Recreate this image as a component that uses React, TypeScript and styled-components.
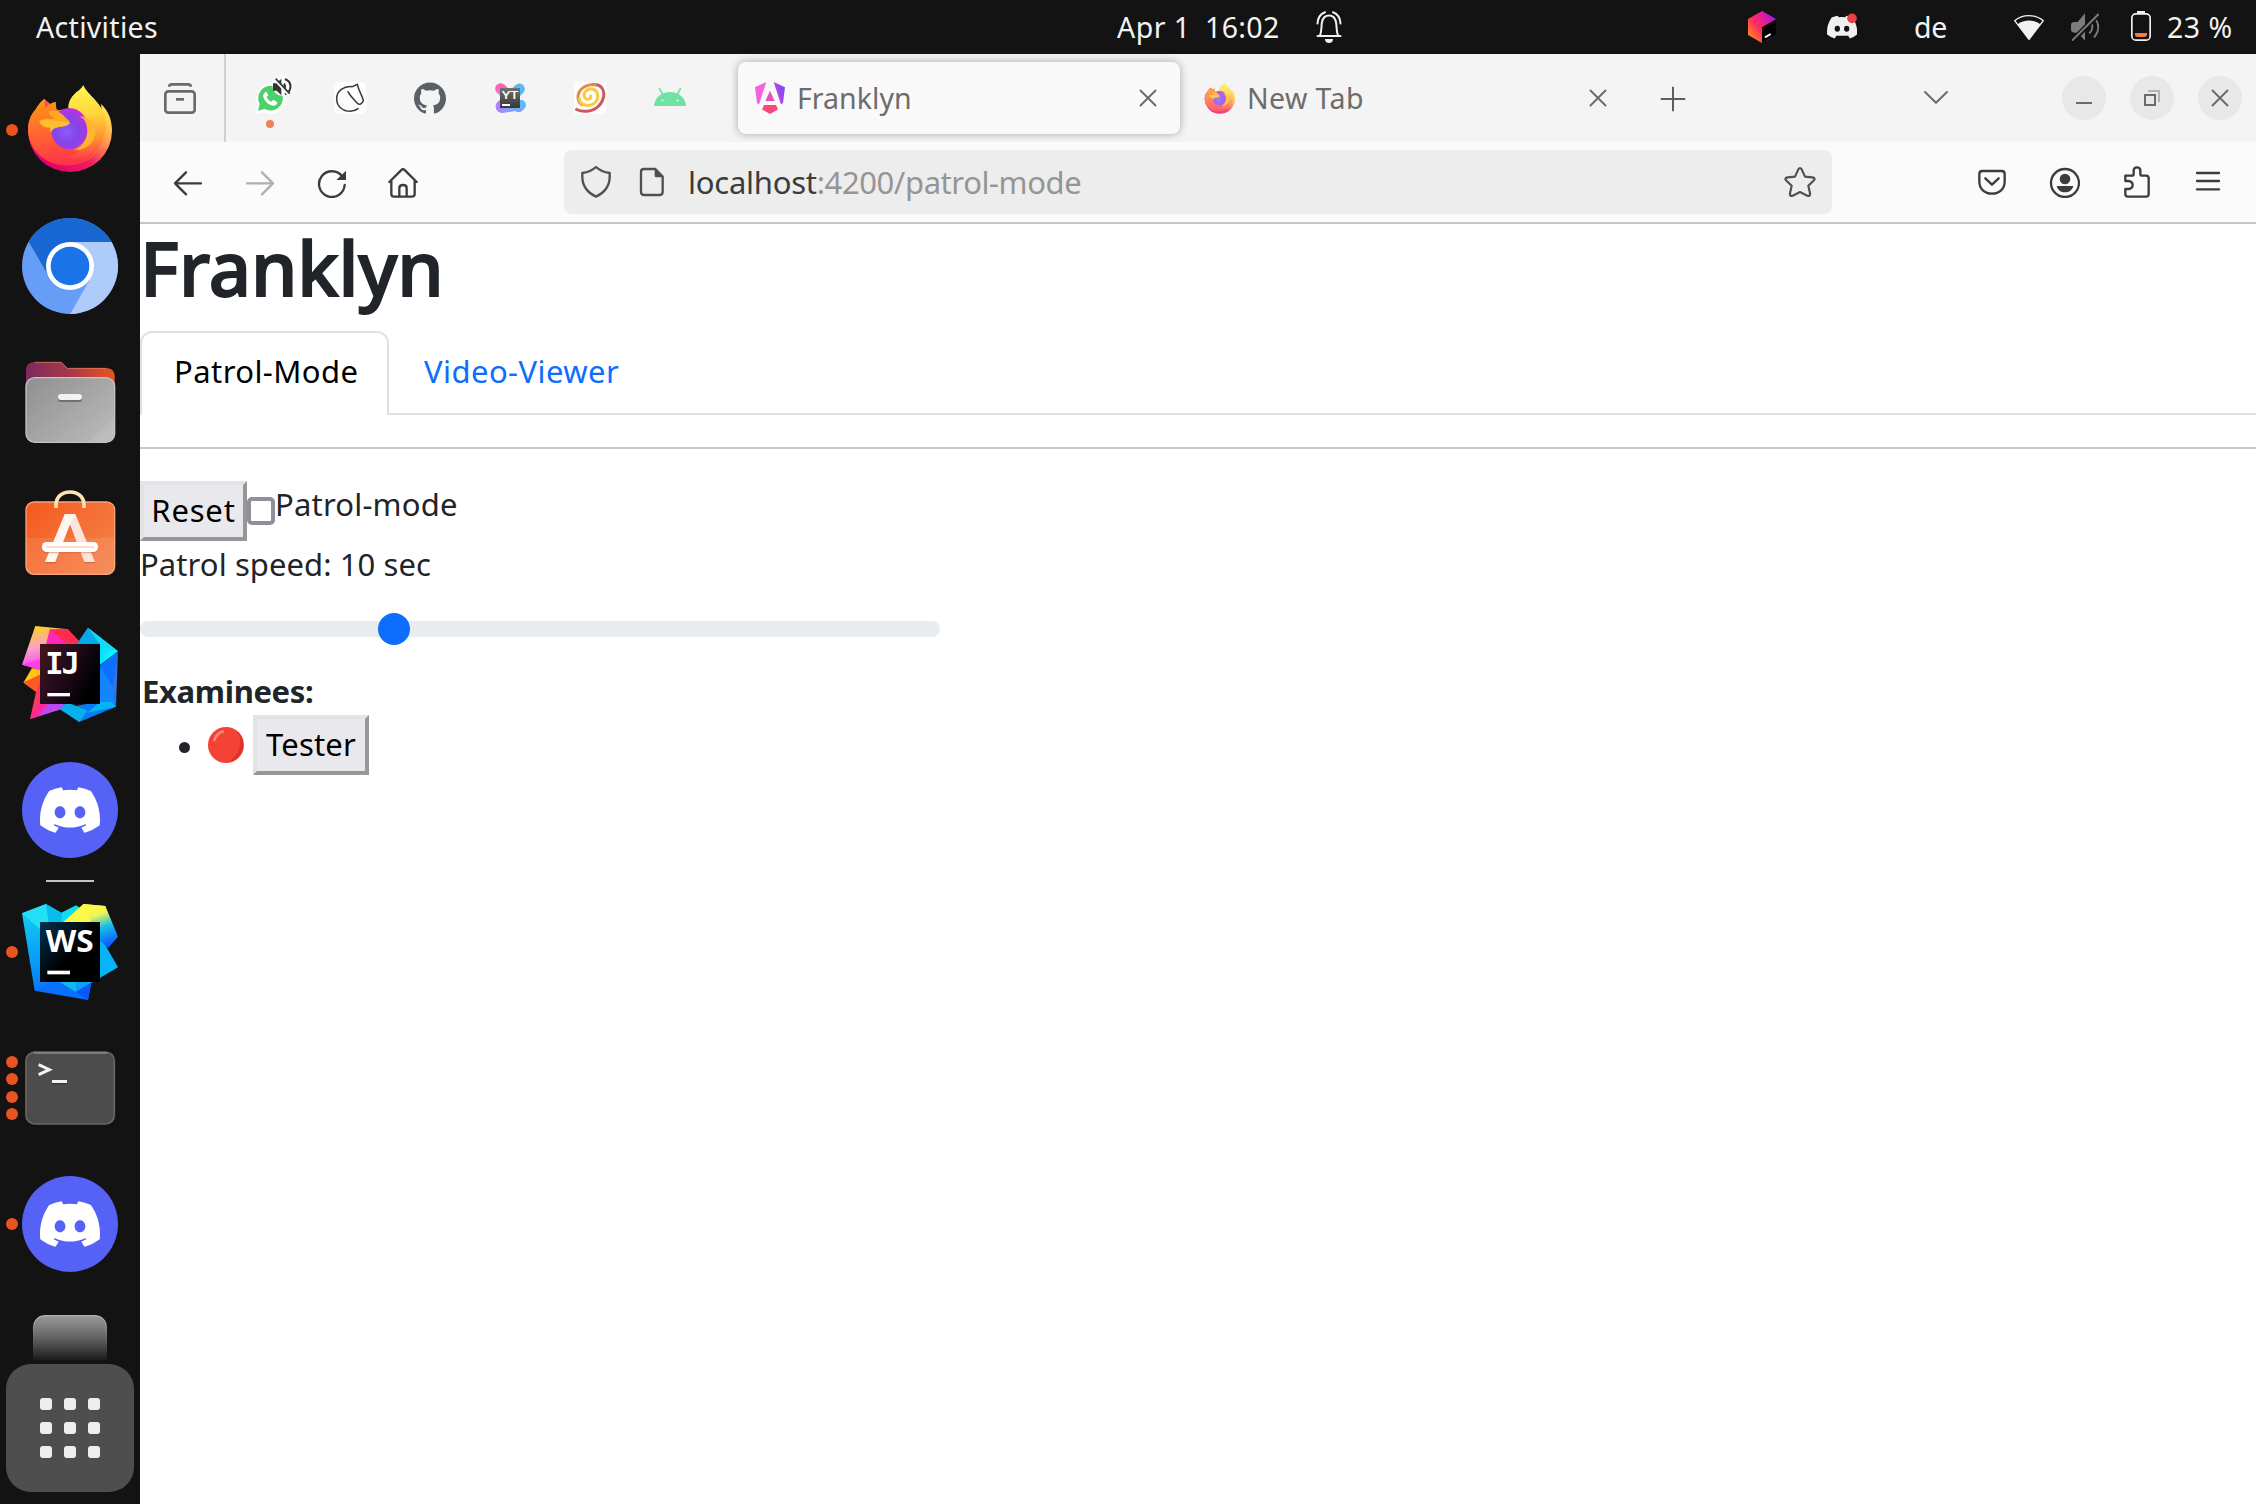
import React from "react";
import styled, { createGlobalStyle } from "styled-components";
import { SiDiscord, SiGithub } from "react-icons/si";

const GlobalStyle = createGlobalStyle`
  * { box-sizing: border-box; }
  body { margin: 0; background: #fff; font-family: "Noto Sans", "Open Sans", sans-serif; }
  svg { display: block; flex: none; }
`;

const Screen = styled.div`
  width: 2256px;
  height: 1504px;
  overflow: hidden;
  display: grid;
  grid-template: 54px 1450px / 140px 2116px;
  background: #fff;
`;

const TopBar = styled.header`
  grid-column: 1 / 3;
  display: flex;
  align-items: center;
  background: #131313;
  color: #f2f2f2;
  font-size: 28.5px;
  line-height: 54px;
  white-space: pre;
`;

const Slot = styled.div<{ $w: number; $ls?: number; $pad?: number }>`
  flex: none;
  display: flex;
  align-items: center;
  width: ${(p) => p.$w}px;
  padding-left: ${(p) => p.$pad || 0}px;
  letter-spacing: ${(p) => p.$ls || 0}px;
`;

const Dock = styled.nav`
  display: flex;
  flex-direction: column;
  background: #131313;
  padding-top: 8px;
`;

const DockItem = styled.div<{ $clip?: boolean }>`
  flex: none;
  height: ${(p) => (p.$clip ? 68 : 136)}px;
  overflow: hidden;
  display: grid;
  grid-template-columns: 22px 96px;
  align-items: ${(p) => (p.$clip ? "start" : "center")};
  padding-top: ${(p) => (p.$clip ? 20 : 0)}px;
`;

const Dots = styled.div`
  display: flex;
  flex-direction: column;
  gap: 5.4px;
  padding-left: 6px;
`;

const Dot = styled.i`
  width: 12px;
  height: 12px;
  border-radius: 50%;
  background: #e95420;
`;

const DockSeparator = styled.div`
  flex: none;
  height: 2px;
  margin: 2px 46px;
  background: #c4c4c4;
`;

const DiscordDisc = styled.div`
  width: 96px;
  height: 96px;
  border-radius: 50%;
  display: flex;
  align-items: center;
  justify-content: center;
  background: #5662f6;
  color: #fff;
  font-size: 60px;
`;

const AppGrid = styled.div`
  flex: none;
  width: 128px;
  height: 128px;
  margin: 4px 6px 0;
  padding: 34px;
  border-radius: 25px;
  background: #4e4e4e;
  display: grid;
  grid-template-columns: repeat(3, 12px);
  gap: 12px;
`;

const AppGridCell = styled.i`
  height: 12px;
  border-radius: 3px;
  background: #eeeeec;
`;

const Browser = styled.main`
  display: flex;
  flex-direction: column;
`;

const TabStrip = styled.div`
  height: 88px;
  display: flex;
  align-items: center;
  background: #f4f4f4;
`;

const ViewButton = styled.div`
  width: 86px;
  height: 88px;
  padding-left: 24px;
  display: flex;
  align-items: center;
  border-right: 2px solid #d0d0d0;
`;

const PinnedTabs = styled.div`
  display: flex;
  width: 512px;
  padding-left: 28px;
  gap: 48px;
`;

const Pinned = styled.div`
  position: relative;
  width: 32px;
  height: 32px;
  color: #5b5f66;
  font-size: 32px;
`;

const UnreadDot = styled.i`
  position: absolute;
  left: 12px;
  top: 38px;
  width: 8px;
  height: 8px;
  border-radius: 50%;
  background: #ee8055;
`;

const Tab = styled.div<{ $active?: boolean; $ls: number }>`
  width: 442px;
  height: 72px;
  margin-right: 8px;
  padding: 0 16px;
  display: flex;
  align-items: center;
  border-radius: 8px;
  background: ${(p) => (p.$active ? "#f9f9f9" : "transparent")};
  box-shadow: ${(p) => (p.$active ? "0 0 8px rgba(0,0,0,.32)" : "none")};
  color: #6c6c6c;
  font-size: 28.5px;
  letter-spacing: ${(p) => p.$ls}px;
`;

const TabTitle = styled.span`
  flex: 1;
  padding-left: 11px;
`;

const Faded = styled.div`
  opacity: 0.78;
`;

const WindowButtons = styled.div`
  display: flex;
  gap: 24px;
  margin-left: 110px;
`;

const WindowButton = styled.div`
  width: 44px;
  height: 44px;
  border-radius: 50%;
  background: #e8e8e8;
  display: flex;
  align-items: center;
  justify-content: center;
`;

const Toolbar = styled.div`
  height: 82px;
  padding: 8px 32px 8px;
  display: flex;
  align-items: center;
  background: #fbfbfb;
  border-bottom: 2px solid #c6c6c6;
`;

const ToolGroup = styled.div`
  display: flex;
  gap: 40px;
`;

const UrlBar = styled.div`
  width: 1268px;
  height: 64px;
  margin: 0 144px 0 144px;
  padding: 0 16px;
  border-radius: 8px;
  background: #ededed;
  display: flex;
  align-items: center;
  gap: 24px;
  color: #959595;
  font-size: 31px;
`;

const UrlText = styled.span`
  flex: 1;
  margin-left: -4px;
  letter-spacing: -0.42px;
`;

const Host = styled.span`
  color: #3c3c3c;
  letter-spacing: -0.25px;
`;

const Page = styled.section`
  flex: 1;
  color: #212529;
  font-size: 31px;
  line-height: 46px;
  white-space: nowrap;
`;

const Title = styled.h1`
  margin: 0 0 19px;
  font-size: 74px;
  font-weight: 500;
  line-height: 88px;
  letter-spacing: -0.1px;
  -webkit-text-stroke: 1.8px #212529;
`;

const NavTabs = styled.div`
  display: flex;
  height: 84px;
  box-shadow: inset 0 -2px #dee2e6;
`;

const NavTab = styled.a<{ $active?: boolean; $ls: number }>`
  height: 84px;
  width: ${(p) => (p.$active ? 249 : 260)}px;
  padding: 15px 0 0 ${(p) => (p.$active ? 32 : 33)}px;
  border: 2px solid ${(p) => (p.$active ? "#dee2e6" : "transparent")};
  border-bottom: 0;
  border-radius: 12px 12px 0 0;
  background: ${(p) => (p.$active ? "#fff" : "transparent")};
  color: ${(p) => (p.$active ? "#000" : "#0d6efd")};
  letter-spacing: ${(p) => p.$ls}px;
`;

const Rule = styled.hr`
  height: 2px;
  margin: 32px 0;
  border: 0;
  background: #c7c8c9;
`;

const Row = styled.div`
  display: flex;
  align-items: center;
  height: 60px;
`;

const Button = styled.button<{ $w: number; $ls: number }>`
  width: ${(p) => p.$w}px;
  height: 60px;
  padding: 0 0 2px;
  border: 4px solid;
  border-color: #e3e3e3 #979797 #979797 #e3e3e3;
  background: #e9e9ed;
  color: #000;
  font: inherit;
  line-height: 48px;
  letter-spacing: ${(p) => p.$ls}px;
`;

const Checkbox = styled.span`
  width: 28px;
  height: 28px;
  border: 4px solid #8f8f9d;
  border-radius: 5px;
  background: #fff;
`;

const CheckLabel = styled.label`
  padding-bottom: 15px;
  letter-spacing: 0.19px;
`;

const Speed = styled.div`
  letter-spacing: 0.08px;
`;

const Track = styled.div`
  position: relative;
  width: 800px;
  height: 16px;
  margin: 34px 0 30px;
  border-radius: 8px;
  background: #e9ecef;
`;

const Thumb = styled.i`
  position: absolute;
  left: 238px;
  top: -8px;
  width: 32px;
  height: 32px;
  border-radius: 50%;
  background: #0d6efd;
`;

const Heading = styled.div`
  height: 48px;
  line-height: 48px;
  padding-left: 2px;
  font-weight: 700;
  letter-spacing: -0.34px;
`;

const ListRow = styled(Row)`
  padding-left: 39px;
`;

const Bullet = styled.i`
  width: 11px;
  height: 11px;
  margin: 5px 18px 0 0;
  border-radius: 50%;
  background: #212529;
`;

const Status = styled.span`
  width: 45px;
`;

const Icon = ({ vb, size = 32, children, overflow }: any) => (
  <svg width={size} height={size} viewBox={vb} fill="none" overflow={overflow}>
    {children}
  </svg>
);

const dark = { stroke: "#3c3c3c", strokeWidth: 7, strokeLinecap: "round", strokeLinejoin: "round" } as const;

const Firefox = ({ size = 96, vb = "66 66 288 288" }: any) => (
  <Icon size={size} vb={vb}>
    <defs>
      <linearGradient id="ffBody" x1="300" y1="110" x2="140" y2="320" gradientUnits="userSpaceOnUse">
        <stop offset="0" stopColor="#fff04a" />
        <stop offset=".35" stopColor="#ffb02e" />
        <stop offset=".65" stopColor="#ff6a35" />
        <stop offset="1" stopColor="#ff2d50" />
      </linearGradient>
      <linearGradient id="ffBase" x1="330" y1="150" x2="150" y2="330" gradientUnits="userSpaceOnUse">
        <stop offset="0" stopColor="#fff04a" />
        <stop offset=".3" stopColor="#ff9a50" />
        <stop offset=".6" stopColor="#f0205c" />
        <stop offset="1" stopColor="#e0006e" />
      </linearGradient>
      <radialGradient id="ffGlobe" cx="200" cy="215" r="70" gradientUnits="userSpaceOnUse">
        <stop offset="0" stopColor="#8c5cff" />
        <stop offset=".5" stopColor="#8444e8" />
        <stop offset="1" stopColor="#b833e1" />
      </radialGradient>
      <linearGradient id="ffLeft" x1="120" y1="120" x2="150" y2="310" gradientUnits="userSpaceOnUse">
        <stop offset="0" stopColor="#ff980e" />
        <stop offset=".5" stopColor="#ff6830" />
        <stop offset="1" stopColor="#ff3647" />
      </linearGradient>
      <linearGradient id="ffTail" x1="250" y1="80" x2="270" y2="290" gradientUnits="userSpaceOnUse">
        <stop offset="0" stopColor="#fff44f" />
        <stop offset=".4" stopColor="#ffd63a" />
        <stop offset=".75" stopColor="#ff9030" />
        <stop offset="1" stopColor="#ff4448" />
      </linearGradient>
    </defs>
    <path d="M303 132C325 152 336 180 336 212A126 124 0 0 1 84 212C84 190 92 165 106 150C116 134 124 124 133 117L210 180L306 160Z" fill="url(#ffBase)" />
    <path d="M84 205C86 180 94 162 106 150C116 134 124 124 133 117C133 128 134 138 138 144C146 134 156 128 167 126C165 136 166 146 168 152L206 146C203 124 218 104 236 92C244 86 248 80 250 76C256 98 300 124 313 165C322 200 318 240 290 276C262 314 200 326 150 306C108 288 84 250 84 205Z" fill="url(#ffBody)" />
    <path d="M84 205C86 180 94 162 106 150C116 134 124 124 133 117C133 128 134 138 138 144C146 134 156 128 167 126L170 154L220 270L285 280C255 314 200 326 150 306C108 288 84 250 84 205Z" fill="url(#ffLeft)" />
    <path d="M206 146C203 124 218 104 236 92C244 86 248 80 250 76C256 98 300 124 313 165C322 205 315 245 285 280C260 300 220 300 200 290C250 280 275 240 262 205C256 176 240 155 206 146Z" fill="url(#ffTail)" />
    <ellipse cx="208" cy="206" rx="56" ry="62" fill="url(#ffGlobe)" />
    <path d="M237 170C254 172 262 192 262 214C262 242 245 262 226 270C262 270 286 246 286 214C284 188 262 168 237 170Z" fill="#ffb52e" />
    <path d="M118 184C130 172 150 178 162 176C150 168 145 160 148 154C166 150 182 156 192 168C200 176 208 182 210 188C206 196 196 198 182 200C166 202 156 206 152 220C150 210 152 204 148 202C134 204 122 196 118 184Z" fill="#ffa722" />
    <path d="M118 184C134 174 156 182 182 184C196 186 204 188 210 188C204 197 194 198 182 200C166 202 156 206 152 216C150 208 152 204 148 202C134 204 122 196 118 184Z" fill="#ffbd30" />
  </Icon>
);

const Chromium = () => (
  <Icon size={96} vb="66 474 288 288">
    <clipPath id="crClip"><circle cx="210" cy="618" r="144" /></clipPath>
    <g clipPath="url(#crClip)">
      <rect x="66" y="474" width="288" height="288" fill="#669df6" />
      <path d="M60 474H360V546H210L147 650L60 500Z" fill="#1967d2" />
      <path d="M210 546H360V770H206L272 654Z" fill="#aecbfa" />
    </g>
    <circle cx="210" cy="618" r="72" fill="#fff" />
    <circle cx="210" cy="618" r="58" fill="#1a73e8" />
  </Icon>
);

const Files = () => (
  <Icon size={96} vb="66 72 288 288">
    <defs>
      <linearGradient id="flBack" x1="78" y1="150" x2="344" y2="120" gradientUnits="userSpaceOnUse">
        <stop offset="0" stopColor="#7a2a5c" />
        <stop offset=".5" stopColor="#a8384a" />
        <stop offset="1" stopColor="#e95420" />
      </linearGradient>
      <linearGradient id="flFront" x1="120" y1="140" x2="300" y2="340" gradientUnits="userSpaceOnUse">
        <stop offset="0" stopColor="#939393" />
        <stop offset="1" stopColor="#b8b8b8" />
      </linearGradient>
    </defs>
    <path d="M78 200V122C78 104 88 96 106 96H184L202 114H316C334 114 344 122 344 140V200Z" fill="url(#flBack)" />
    <path d="M104 97H184L202 115H318" stroke="#e08868" strokeWidth="3" opacity=".7" />
    <rect x="78" y="143" width="266" height="194" rx="26" fill="url(#flFront)" stroke="#c4c4c4" strokeWidth="4" />
    <path d="M280 320L342 262V312C340 326 332 334 318 335H262Z" fill="#fff" opacity=".07" />
    <rect x="174" y="197" width="72" height="19" rx="9" fill="#707070" />
    <rect x="174" y="192" width="72" height="18" rx="9" fill="#f2f2f2" />
  </Icon>
);

const Software = () => (
  <Icon size={96} vb="66 480 288 288">
    <defs>
      <linearGradient id="swBg" x1="100" y1="520" x2="320" y2="730" gradientUnits="userSpaceOnUse">
        <stop offset="0" stopColor="#f45c20" />
        <stop offset="1" stopColor="#f4834a" />
      </linearGradient>
    </defs>
    <rect x="78" y="516" width="266" height="217" rx="24" fill="url(#swBg)" stroke="#f9a27c" strokeWidth="4" />
    <path d="M78 624H344V708C344 724 334 733 318 733H104C88 733 78 724 78 708Z" fill="#fff" opacity=".09" />
    <path d="M168 534V526C168 500 186 486 210 486C234 486 252 500 252 526V534" stroke="#fde3b0" strokeWidth="11" />
    <path d="M136 700H166L210 588L254 700H286L226 556H195Z" fill="#a8401c" opacity=".4" />
    <path d="M194 552H226L285 696H253L210 584Z" fill="#fde4da" />
    <path d="M194 552H226L210 584L166 696H135Z" fill="#fff6f0" />
    <rect x="126" y="640" width="168" height="30" rx="14" fill="#c8603c" opacity=".45" />
    <rect x="126" y="636" width="168" height="30" rx="14" fill="#fff" />
    <rect x="137" y="648" width="146" height="6" rx="3" fill="#fddccf" />
  </Icon>
);

const IntelliJ = () => (
  <Icon size={96} vb="66 258 288 288">
    <defs>
      <linearGradient id="ijA" x1="100" y1="262" x2="130" y2="380" gradientUnits="userSpaceOnUse">
        <stop offset="0" stopColor="#ffd21c" />
        <stop offset=".5" stopColor="#fba0c8" />
        <stop offset="1" stopColor="#ff3cf0" />
      </linearGradient>
      <linearGradient id="ijB" x1="150" y1="270" x2="130" y2="530" gradientUnits="userSpaceOnUse">
        <stop offset="0" stopColor="#ff2d50" />
        <stop offset=".5" stopColor="#ff318c" />
        <stop offset="1" stopColor="#ff2aa0" />
      </linearGradient>
      <linearGradient id="ijC" x1="240" y1="290" x2="340" y2="330" gradientUnits="userSpaceOnUse">
        <stop offset="0" stopColor="#087cf5" />
        <stop offset=".4" stopColor="#07c3f2" />
        <stop offset="1" stopColor="#0cf6ff" />
      </linearGradient>
      <linearGradient id="ijD" x1="120" y1="350" x2="280" y2="430" gradientUnits="userSpaceOnUse">
        <stop offset="0" stopColor="#40141c" />
        <stop offset=".5" stopColor="#200a1c" />
        <stop offset="1" stopColor="#000" />
      </linearGradient>
    </defs>
    <path d="M106 258L204 268L160 340L120 388L66 374Z" fill="url(#ijA)" />
    <path d="M150 268L204 268L300 370V420L120 400Z" fill="url(#ijB)" />
    <path d="M150 268L134 330L160 312H236Z" fill="#ff28b8" />
    <path d="M152 270L204 268L240 312L210 320Z" fill="#ff2c50" />
    <path d="M66 374L120 358V390Z" fill="#ff3cf0" />
    <path d="M96 384L70 428L122 405V390Z" fill="#ffc414" />
    <path d="M70 428L122 403V456H108Z" fill="#ff5a24" />
    <path d="M108 456L122 420V492L90 538Z" fill="#ff3566" />
    <path d="M90 538L122 480L182 508Z" fill="#ff2aa0" />
    <path d="M116 528L150 485H200L182 508Z" fill="#b84bf5" />
    <path d="M264 263L354 334L300 375L232 308Z" fill="url(#ijC)" />
    <path d="M264 263L354 334L300 318Z" fill="#10dcf8" />
    <path d="M264 263L300 312H232Z" fill="#08a8e8" />
    <path d="M354 334L340 440L296 380Z" fill="#0a72ff" />
    <path d="M354 334L348 500L338 440Z" fill="#3c70e0" />
    <path d="M340 440L348 500L296 490V375Z" fill="#1484ff" />
    <path d="M348 500L238 546L180 508L290 486Z" fill="#087cf5" />
    <path d="M348 500L262 518L300 486H334Z" fill="#08b4f0" />
    <path d="M238 546L180 508L200 486L262 512Z" fill="#08b0ea" />
    <rect x="120" y="312" width="180" height="180" fill="url(#ijD)" />
    <text x="136" y="402" fontFamily="DejaVu Sans Mono, monospace" fontWeight="700" fontSize="91" fill="#fff" textLength="103">IJ</text>
    <rect x="142" y="459" width="68" height="10" fill="#fff" />
  </Icon>
);

const WebStorm = () => (
  <Icon size={96} vb="66 132 288 288">
    <defs>
      <linearGradient id="wsA" x1="70" y1="150" x2="150" y2="400" gradientUnits="userSpaceOnUse">
        <stop offset="0" stopColor="#14d0f4" />
        <stop offset=".6" stopColor="#089cf8" />
        <stop offset="1" stopColor="#0870ff" />
      </linearGradient>
      <linearGradient id="wsB" x1="290" y1="140" x2="330" y2="250" gradientUnits="userSpaceOnUse">
        <stop offset="0" stopColor="#fcf84a" />
        <stop offset=".2" stopColor="#f0f452" />
        <stop offset=".55" stopColor="#18c0e8" />
        <stop offset="1" stopColor="#1060ff" />
      </linearGradient>
      <linearGradient id="wsC" x1="120" y1="190" x2="220" y2="280" gradientUnits="userSpaceOnUse">
        <stop offset="0" stopColor="#04304e" />
        <stop offset="1" stopColor="#000" />
      </linearGradient>
    </defs>
    <path d="M66 160L138 132L184 158L230 400L104 392Z" fill="url(#wsA)" />
    <path d="M66 160L138 132L146 190L120 208Z" fill="#24e0f4" />
    <path d="M138 132L184 158L190 190H148Z" fill="#08bcec" />
    <path d="M184 158L228 136L250 150L220 190H186Z" fill="#10dcf0" />
    <path d="M190 186L250 132L316 138L300 186Z" fill="#fcf84a" />
    <path d="M250 132L316 138L354 230L324 264L296 240Z" fill="url(#wsB)" />
    <path d="M316 256L354 322L298 354V240Z" fill="#08b4f8" />
    <path d="M354 322L228 396L180 366L300 350Z" fill="#08a0f8" />
    <path d="M104 392L160 364L228 396L274 370L264 420Z" fill="#0a70ff" />
    <path d="M228 396L274 370L264 420Z" fill="#0858ff" />
    <path d="M174 362L228 396V362Z" fill="#10b8ec" />
    <rect x="120" y="186" width="180" height="180" fill="url(#wsC)" />
    <text x="137" y="275" fontFamily="Open Sans, Noto Sans, sans-serif" fontWeight="700" fontSize="92" fill="#fff" textLength="144" lengthAdjust="spacingAndGlyphs">WS</text>
    <rect x="142" y="332" width="68" height="11" fill="#fff" />
  </Icon>
);

const Terminal = () => (
  <Icon size={96} vb="66 540 288 288">
    <rect x="78" y="576" width="265" height="216" rx="26" fill="#4c4c4c" stroke="#666" strokeWidth="5" />
    <path d="M100 579H322" stroke="#8a8a8a" strokeWidth="5" />
    <path d="M116 614L148 629L116 644" stroke="#f2f2f2" strokeWidth="9" />
    <rect x="156" y="668" width="45" height="5" fill="#383838" />
    <rect x="156" y="660" width="45" height="9" fill="#f2f2f2" />
  </Icon>
);

const Trash = () => (
  <Icon size={96} vb="66 456 288 288">
    <defs>
      <linearGradient id="trBg" x1="0" y1="468" x2="0" y2="604" gradientUnits="userSpaceOnUse">
        <stop offset="0" stopColor="#999" />
        <stop offset=".5" stopColor="#606060" />
        <stop offset="1" stopColor="#181818" />
      </linearGradient>
      <linearGradient id="trEdge" x1="0" y1="468" x2="0" y2="604" gradientUnits="userSpaceOnUse">
        <stop offset="0" stopColor="#c8c8c8" />
        <stop offset="1" stopColor="#131313" />
      </linearGradient>
    </defs>
    <rect x="101" y="467" width="218" height="200" rx="32" fill="url(#trBg)" stroke="url(#trEdge)" strokeWidth="3" />
  </Icon>
);

const Close = () => (
  <Icon vb="0 0 32 32"><path d="M8.5 8.5L23.5 23.5M23.5 8.5L8.5 23.5" stroke="#6a6a6a" strokeWidth="1.9" strokeLinecap="round" /></Icon>
);

export default function App() {
  return (
    <Screen>
      <GlobalStyle />
      <TopBar>
        <Slot $w={1116} $pad={36} $ls={0.32}>Activities</Slot>
        <Slot $w={89} $pad={1} $ls={0.45}>Apr 1</Slot>
        <Slot $w={108} $ls={0.36}>16:02</Slot>
        <Slot $w={433}>
          <Icon vb="0 0 32 32">
            <g stroke="#f2f2f2" strokeWidth="2" strokeLinecap="round">
              <path d="M4.5 25H27.5M7 24.5C9 20 8 16 9 11C10 6.500 12.500 4.500 16 4.500C19.500 4.500 22 6.500 23 11C24 16 23 20 25 24.500" />
              <path d="M4.500 12.500C4.800 7 7.500 3 12 1.300M27.500 12.500C27.200 7 24.500 3 20 1.300" />
            </g>
            <path d="M12 28H20C20 30.500 18.500 32 16 32S12 30.500 12 28Z" fill="#f2f2f2" />
          </Icon>
        </Slot>
        <Slot $w={80}>
          <Icon vb="30 33 96 96">
            <defs>
              <linearGradient id="tb" x1="36" y1="110" x2="118" y2="50" gradientUnits="userSpaceOnUse">
                <stop offset="0" stopColor="#ff8a1c" /><stop offset=".42" stopColor="#ff2a64" /><stop offset=".7" stopColor="#e01c9c" /><stop offset="1" stopColor="#a018f0" />
              </linearGradient>
            </defs>
            <path d="M78 33L120 57V105L78 129L36 105V57Z" fill="url(#tb)" />
            <path d="M78 82L120 58V105L78 129Z" fill="#000" />
            <path d="M87 112L104 102" stroke="#fff" strokeWidth="6" />
          </Icon>
        </Slot>
        <Slot $w={88}>
          <Icon vb="270 33 96 96">
            <svg x="273" y="36" width="90" height="90" viewBox="0 0 24 24"><path fill="#f0f0f0" d="M20.300 4.400A19.800 19.800 0 0 0 15.400 2.900L14.700 4.200A18.300 18.300 0 0 0 9.300 4.200L8.600 2.900A19.700 19.700 0 0 0 3.700 4.400C.5 9 -.3 13.600 .1 18C2.200 19.600 4.200 20.500 6.200 21.100L7.400 19L17 19L18.200 21.100C20.200 20.500 22.200 19.600 24 18C24.500 12.900 23.200 8.400 20.300 4.400Z" /></svg>
            <ellipse cx="304" cy="86" rx="8" ry="9" fill="#131313" /><ellipse cx="332" cy="86" rx="8" ry="9" fill="#131313" />
            <circle cx="348" cy="55" r="14.500" fill="#e8413f" />
          </Icon>
        </Slot>
        <Slot $w={99} $ls={-0.3}>de</Slot>
        <Slot $w={56}>
          <Icon vb="831 33 96 96">
            <path d="M836 62C860 42 898 42 922 62L879 118Z" stroke="#f2f2f2" strokeWidth="4" strokeLinejoin="round" />
            <path d="M845 73C864 58 894 58 913 73L879 119Z" fill="#f2f2f2" />
          </Icon>
        </Slot>
        <Slot $w={56}>
          <Icon vb="999 33 96 96">
            <path d="M1005 76Q1005 66 1015 66H1025L1047 40V122L1025 98H1015Q1005 98 1005 88Z" fill="#7c7c7c" />
            <path d="M1063 64C1072 76 1070 90 1060 100M1076 54C1092 74 1088 96 1074 112" stroke="#7c7c7c" strokeWidth="6" />
            <path d="M1010 122L1088 42" stroke="#131313" strokeWidth="16" />
            <path d="M1008 122L1088 42" stroke="#7c7c7c" strokeWidth="6" />
          </Icon>
        </Slot>
        <Slot $w={42}>
          <Icon vb="1167 33 96 96">
            <rect x="1203" y="33" width="24" height="8" fill="#f2f2f2" />
            <rect x="1187.500" y="41.500" width="55" height="79" rx="12" stroke="#f2f2f2" strokeWidth="5" />
            <path d="M1197 99H1233V103Q1233 111 1225 111H1205Q1197 111 1197 103Z" fill="#f87a3c" />
          </Icon>
        </Slot>
        <Slot $w={80} $ls={0.5}>23 %</Slot>
      </TopBar>

      <Dock>
        <DockItem><Dots><Dot /></Dots><Firefox /></DockItem>
        <DockItem><Dots /><Chromium /></DockItem>
        <DockItem><Dots /><Files /></DockItem>
        <DockItem><Dots /><Software /></DockItem>
        <DockItem><Dots /><IntelliJ /></DockItem>
        <DockItem><Dots /><DiscordDisc><SiDiscord /></DiscordDisc></DockItem>
        <DockSeparator />
        <DockItem><Dots><Dot /></Dots><WebStorm /></DockItem>
        <DockItem><Dots><Dot /><Dot /><Dot /><Dot /></Dots><Terminal /></DockItem>
        <DockItem><Dots><Dot /></Dots><DiscordDisc><SiDiscord /></DiscordDisc></DockItem>
        <DockItem $clip><Dots /><Trash /></DockItem>
        <AppGrid>{Array.from({ length: 9 }, (_, i) => <AppGridCell key={i} />)}</AppGrid>
      </Dock>

      <Browser>
        <TabStrip>
          <ViewButton>
            <Icon vb="42 66 96 96">
              <rect x="46" y="94" width="88" height="64" rx="9" stroke="#6a6a6a" strokeWidth="8" />
              <path d="M57 80C58 75 61 73 66 73H114C119 73 122 75 123 80" stroke="#6a6a6a" strokeWidth="8" />
              <path d="M78 118H102" stroke="#6a6a6a" strokeWidth="8" />
            </Icon>
          </ViewButton>
          <PinnedTabs>
            <Pinned>
              <Icon vb="312 66 96 96" overflow="visible">
                <path d="M318 157L325 133A42 42 0 1 1 342 152Z" fill="#fff" stroke="#fff" strokeWidth="6" strokeLinejoin="round" />
                <path d="M324 152L329 132A37 37 0 1 1 344 147Z" fill="#4bd06c" />
                <path d="M344 98C339 102 338 108 342 116C348 128 360 137 372 137C378 137 382 132 382 127L370 119L364 125C358 123 352 117 350 111L355 106L350 96C348 95 346 96 344 98Z" fill="#fff" />
                <circle cx="398" cy="77" r="31" fill="#fbfbfb" />
                <path d="M369 70H380L394 56V106L380 92H369Z" fill="#333" />
                <path d="M402 71Q408 80 402 92M405 57C427 66 427 92 405 103" stroke="#333" strokeWidth="6" />
                <path d="M374 58L416 103" stroke="#fbfbfb" strokeWidth="9" />
                <path d="M377 56L419 101" stroke="#333" strokeWidth="5" />
              </Icon>
              <UnreadDot />
            </Pinned>
            <Pinned>
              <Icon vb="552 66 96 96">
                <rect x="552" y="66" width="96" height="96" rx="14" fill="#fcfcfc" />
                <path d="M594 95C600 108 614 120 622 130C628 136 636 132 640 122C638 108 626 94 622 73C616 75 612 80 606 80C582 78 560 92 560 116C560 140 580 154 600 154C610 154 618 151 624 146" stroke="#3a3a3a" strokeWidth="4.500" strokeLinecap="round" strokeLinejoin="round" />
              </Icon>
            </Pinned>
            <Pinned><SiGithub /></Pinned>
            <Pinned>
              <Icon vb="1032 66 96 96">
                <defs>
                  <linearGradient id="ytL" x1="0" y1="80" x2="0" y2="150" gradientUnits="userSpaceOnUse"><stop offset="0" stopColor="#ff5fb0" /><stop offset=".3" stopColor="#f878c8" /><stop offset="1" stopColor="#a888ff" /></linearGradient>
                  <linearGradient id="ytB" x1="1040" y1="0" x2="1125" y2="0" gradientUnits="userSpaceOnUse"><stop offset="0" stopColor="#b080ff" /><stop offset="1" stopColor="#54c0fc" /></linearGradient>
                  <linearGradient id="ytD" x1="0" y1="84" x2="0" y2="144" gradientUnits="userSpaceOnUse"><stop offset="0" stopColor="#707070" /><stop offset="1" stopColor="#383838" /></linearGradient>
                </defs>
                <path d="M1052 86L1106 140" stroke="url(#ytL)" strokeWidth="33" strokeLinecap="round" />
                <path d="M1108 87L1054 138" stroke="#58b8f8" strokeWidth="33" strokeLinecap="round" />
                <path d="M1054 121A19 19 0 1 0 1058 159L1114 150A14 14 0 0 0 1112 120Z" fill="url(#ytB)" />
                <rect x="1050" y="84" width="60" height="60" fill="url(#ytD)" />
                <text x="1055" y="117" fontFamily="Open Sans, sans-serif" fontWeight="600" fontSize="34" fill="#fff" textLength="50" lengthAdjust="spacingAndGlyphs">YT</text>
                <rect x="1056" y="132" width="24" height="6" fill="#fff" />
              </Icon>
            </Pinned>
            <Pinned>
              <Icon vb="1272 66 96 96">
                <rect x="1272" y="66" width="96" height="96" fill="#fcfcfc" />
                <path d="M1276 147C1304 160 1330 154 1346 138C1362 122 1366 98 1356 84C1350 76 1340 72 1326 74" stroke="#d0575c" strokeWidth="9" />
                <path d="M1340 75C1314 68 1284 86 1284 112C1284 124 1290 131 1298 135" stroke="#e08a54" strokeWidth="9" />
                <path d="M1288 116C1290 134 1310 140 1326 134C1348 124 1350 92 1326 87C1308 84 1298 102 1304 112C1310 122 1324 118 1322 108" stroke="#f8cc3c" strokeWidth="9" strokeLinecap="round" />
              </Icon>
            </Pinned>
            <Pinned>
              <Icon vb="0 0 32 32">
                <path d="M0 24C.6 15.500 7.500 10 16 10S31.400 15.500 32 24Z" fill="#6fe2a4" />
                <path d="M5.500 6.500L9 13M26.500 6.500L23 13" stroke="#6fe2a4" strokeWidth="1.600" strokeLinecap="round" />
                <circle cx="8.500" cy="18.500" r="1" fill="#f4f4f4" /><circle cx="23.500" cy="18.500" r="1" fill="#f4f4f4" />
              </Icon>
            </Pinned>
          </PinnedTabs>
          <Tab $active $ls={0.04}>
            <Icon vb="0 0 32 32">
              <defs>
                <linearGradient id="ng" x1="2" y1="20" x2="30" y2="10" gradientUnits="userSpaceOnUse"><stop offset="0" stopColor="#ff5fd0" /><stop offset=".5" stopColor="#e048d8" /><stop offset="1" stopColor="#8448f4" /></linearGradient>
              </defs>
              <path d="M1 5.300L12.300 0L5 22.500L3 21Z" fill="#f961dc" />
              <path d="M31 5.300L19.700 0L27 22.500L29 21Z" fill="url(#ng)" />
              <path d="M16 8.700L20.600 19H11.400Z" fill="#e850b8" />
              <path d="M10 23H22L24 27.500L16 32L8 27.500Z" fill="#f8487c" />
            </Icon>
            <TabTitle>Franklyn</TabTitle>
            <Close />
          </Tab>
          <Tab $ls={0.41}>
            <Faded><Firefox size={32} vb="78 72 266 266" /></Faded>
            <TabTitle>New Tab</TabTitle>
            <Close />
          </Tab>
          <Slot $w={282} $pad={19}>
            <Icon vb="0 0 32 32"><path d="M16 5.500V28.500M4.500 17H27.500" stroke="#5e5e5e" strokeWidth="2" strokeLinecap="round" /></Icon>
          </Slot>
          <Icon vb="552 246 96 96"><path d="M567 276L600 308L633 276" stroke="#6a6a6a" strokeWidth="6" strokeLinecap="round" strokeLinejoin="round" /></Icon>
          <WindowButtons>
            <WindowButton><Icon vb="0 0 32 32"><path d="M8 21H24" stroke="#6a6a6a" strokeWidth="2" /></Icon></WindowButton>
            <WindowButton>
              <Icon vb="0 0 32 32">
                <path d="M12 9H23V20" stroke="#b4b4b4" strokeWidth="2" />
                <rect x="9" y="13" width="10" height="10" stroke="#6a6a6a" strokeWidth="2" />
              </Icon>
            </WindowButton>
            <WindowButton><Close /></WindowButton>
          </WindowButtons>
        </TabStrip>

        <Toolbar>
          <ToolGroup>
            <Icon vb="66 318 96 96"><path {...dark} d="M153 370H77M108 337L75 370L108 403" /></Icon>
            <Icon vb="282 318 96 96"><path {...dark} stroke="#b0b0b0" d="M291 370H367M336 337L369 370L336 403" /></Icon>
            <Icon vb="498 318 96 96">
              <path {...dark} d="M577 350A38.500 38.500 0 1 0 584 375" />
              <path d="M588 332V360H559Z" fill="#3c3c3c" />
            </Icon>
            <Icon vb="714 318 96 96">
              <path {...dark} d="M718 366L753 331Q759 325 765 331L800 366M724 362V402Q724 410 732 410H786Q794 410 794 402V362M748 408V384Q748 375 759 375Q770 375 770 384V408" />
            </Icon>
          </ToolGroup>
          <UrlBar>
            <Icon vb="1290 318 96 96"><path {...dark} stroke="#505050" d="M1338 321C1350 332 1364 337 1379 339V352C1379 378 1362 400 1338 410C1314 400 1297 378 1297 352V339C1312 337 1326 332 1338 321Z" /></Icon>
            <Icon vb="1458 318 96 96">
              <path {...dark} stroke="#505050" d="M1482 327H1516L1538 350V396Q1538 405 1529 405H1482Q1473 405 1473 396V336Q1473 327 1482 327Z" />
              <path d="M1514 327L1539 352H1518Q1514 352 1514 348Z" fill="#505050" />
            </Icon>
            <UrlText><Host>localhost</Host>:4200/patrol-mode</UrlText>
            <Icon vb="144 498 96 96"><path {...dark} stroke="#505050" strokeWidth={6.5} d="M187 508Q192 500 197 508L207 530L229 532Q239 534 234 541L217 557L222 580Q223 590 214 587L192 576L170 587Q161 590 162 580L167 557L150 541Q145 534 155 532L177 530Z" /></Icon>
          </UrlBar>
          <ToolGroup>
            <Icon vb="720 498 96 96"><path {...dark} d="M739 513H797Q806 513 806 522V545C806 566 790 581 768 581C746 581 730 566 730 545V522Q730 513 739 513ZM748 535L768 554L788 535" /></Icon>
            <Icon vb="936 498 96 96">
              <circle cx="987" cy="549" r="42" stroke="#3c3c3c" strokeWidth="7" />
              <circle cx="987" cy="537" r="16" fill="#3c3c3c" />
              <path d="M962 558H1012C1009 570 999 577 987 577S965 570 962 558Z" fill="#3c3c3c" />
            </Icon>
            <Icon vb="1152 498 96 96"><path {...dark} d="M1168 527H1187Q1193 527 1193 521V512Q1193 502 1203 502Q1213 502 1213 512V521Q1213 527 1219 527H1230Q1238 527 1238 535V582Q1238 590 1230 590H1176Q1168 590 1168 582V567H1178Q1190 565 1190 555Q1190 545 1178 543H1168Z" /></Icon>
            <Icon vb="1368 498 96 96"><path {...dark} d="M1383 519H1449M1383 543H1449M1383 568H1449" /></Icon>
          </ToolGroup>
        </Toolbar>

        <Page>
          <Title>Franklyn</Title>
          <NavTabs>
            <NavTab $active $ls={0.43}>Patrol-Mode</NavTab>
            <NavTab $ls={0.44}>Video-Viewer</NavTab>
          </NavTabs>
          <Rule />
          <Row>
            <Button $w={107} $ls={0.8}>Reset</Button>
            <Checkbox />
            <CheckLabel>Patrol-mode</CheckLabel>
          </Row>
          <Speed>Patrol speed: 10 sec</Speed>
          <Track><Thumb /></Track>
          <Heading>Examinees:</Heading>
          <ListRow>
            <Bullet />
            <Status>
              <Icon size={36} vb="0 0 36 36">
                <circle cx="18" cy="18" r="18" fill="#f44336" />
                <path d="M28 3C36 13 33 26 21 35A18 18 0 0 0 28 3Z" fill="#c62828" opacity=".6" />
                <path d="M6.500 13C8 8 11 5.500 15 4.500" stroke="#ff8a80" strokeWidth="2.500" strokeLinecap="round" />
              </Icon>
            </Status>
            <Button $w={116} $ls={0.19}>Tester</Button>
          </ListRow>
        </Page>
      </Browser>
    </Screen>
  );
}
